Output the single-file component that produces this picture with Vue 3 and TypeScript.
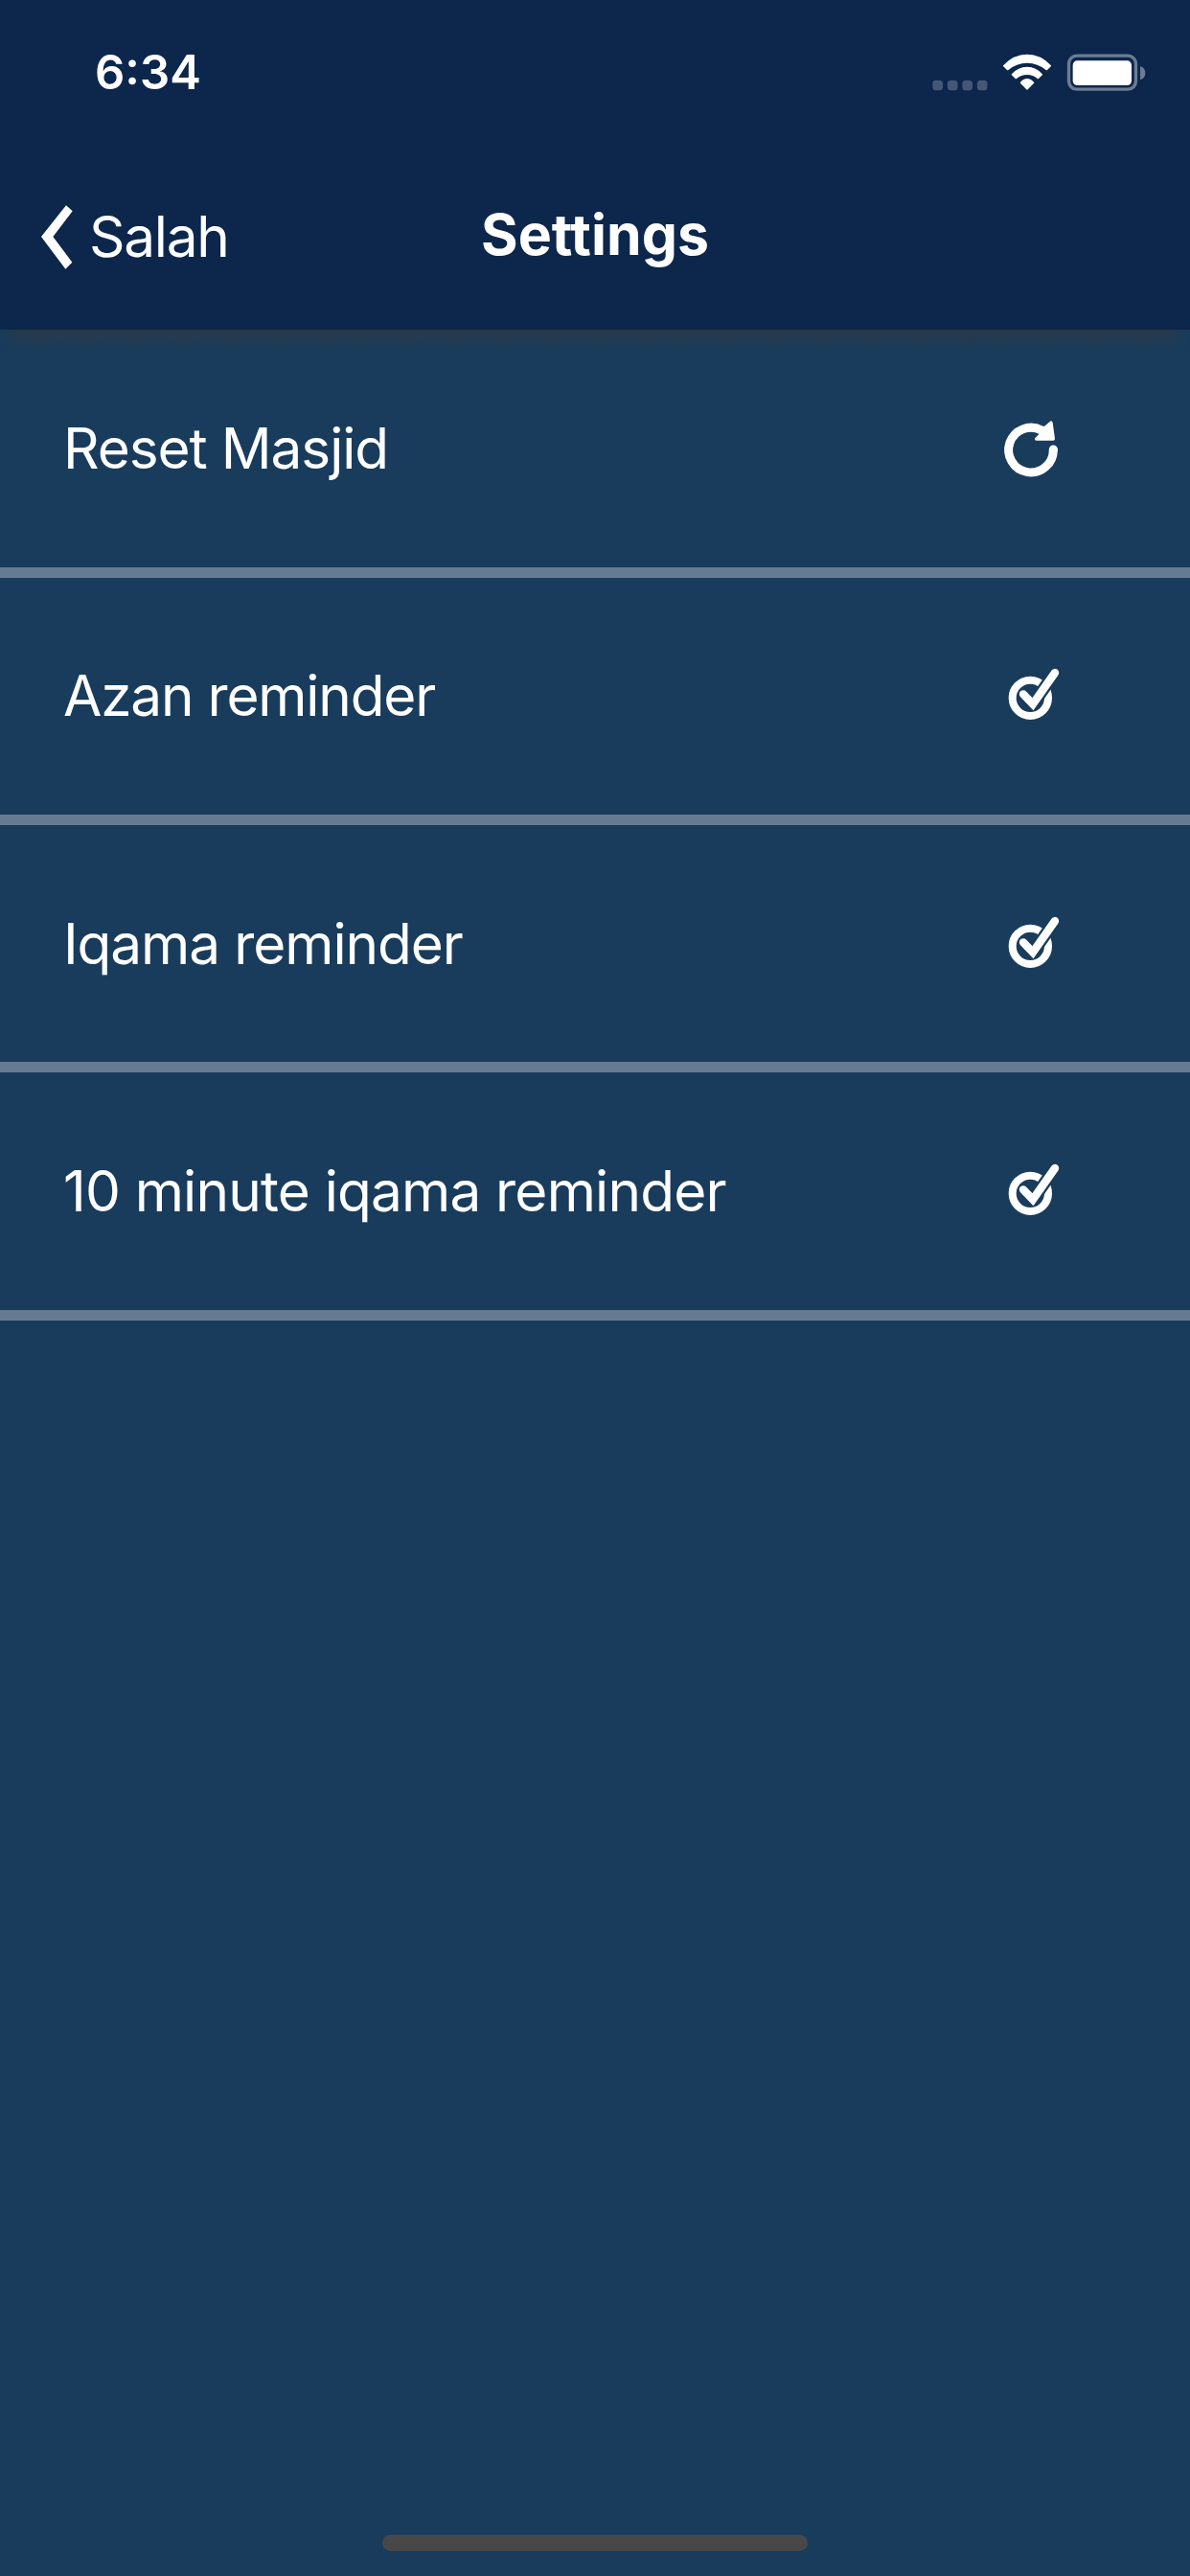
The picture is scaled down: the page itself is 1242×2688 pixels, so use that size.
<script setup lang="ts">
interface SettingRow {
  label: string
  icon: 'reload' | 'check'
  spacing: number
}

const rows: SettingRow[] = [
  { label: 'Reset Masjid', icon: 'reload', spacing: -1.1 },
  { label: 'Azan reminder', icon: 'check', spacing: -1.2 },
  { label: 'Iqama reminder', icon: 'check', spacing: -1.1 },
  { label: '10 minute iqama reminder', icon: 'check', spacing: -0.82 },
]
</script>

<template>
  <div class="screen">
    <header class="header">
      <div class="status">
        <span class="time">6:34</span>
        <svg class="indicators" width="260" height="70" viewBox="0 0 780 210" fill="#fff">
          <g fill="#445776">
            <rect x="70" y="131" width="32" height="32" rx="11" />
            <rect x="116.500" y="131" width="32" height="32" rx="11" />
            <rect x="163" y="131" width="32" height="32" rx="11" />
            <rect x="209.500" y="131" width="32" height="32" rx="11" />
          </g>
          <g stroke="#fff" stroke-width="4" stroke-linejoin="round">
            <path d="M293 86Q324 52 366 52T439 86L427 98Q400 75 366 75T305 98Z" />
            <path d="M319 113Q339 91 366 91T412 113L400 125Q385 112 366 112T331 125Z" />
            <path d="M346 139Q355 128 366 128T386 139L366 159Z" />
          </g>
          <rect x="496.500" y="54.500" width="210" height="105" rx="25" fill="none" stroke="#6d7c94" stroke-width="10" />
          <rect x="509" y="70" width="184" height="77" rx="14" />
          <path d="M720 87Q736 93 736 108.500T720 130Z" fill="#6d7c94" />
        </svg>
      </div>
      <nav class="nav">
        <div class="back">
          <svg width="33" height="67" viewBox="0 0 99 201" fill="#fff">
            <path d="M78 1L98 19L37 99L97 179L76 200L0 99Z" />
          </svg>
          <span class="back-label">Salah</span>
        </div>
        <h1 class="title">Settings</h1>
      </nav>
    </header>
    <main class="list">
      <div v-for="row in rows" :key="row.label" class="row">
        <span class="label" :style="{ letterSpacing: row.spacing + 'px' }">{{ row.label }}</span>
        <svg v-if="row.icon === 'reload'" class="icon" width="90" height="90" viewBox="0 0 270 270">
          <path d="M208 149A70 70 0 1 1 171 87" fill="none" stroke="#fff" stroke-width="27" stroke-linecap="round" />
          <path d="M208 149V147" stroke="#fff" stroke-width="27" stroke-linecap="round" />
          <path d="M155 114L180 90L164 78L181 80L201 63L208 114Z" fill="#fff" stroke="#fff" stroke-width="10" stroke-linejoin="round" />
        </svg>
        <svg v-else class="icon check" width="90" height="90" viewBox="0 0 270 270" fill="none">
          <circle cx="136" cy="145" r="56" stroke="#fff" stroke-width="24" />
          <path d="M144 164L213 66" stroke="#193c5c" stroke-width="39" />
          <path d="M114 133L144 164L213 66" stroke="#fff" stroke-width="25" stroke-linecap="round" />
        </svg>
      </div>
    </main>
    <div class="home"></div>
  </div>
</template>

<style>
body {
  margin: 0;
  background: #193c5c;
}
</style>

<style scoped>
.screen {
  display: flex;
  flex-direction: column;
  width: 1242px;
  height: 2688px;
  overflow: hidden;
  background: #193c5c;
  color: #fff;
  font-family: Inter, "Liberation Sans", sans-serif;
}
.header {
  position: relative;
  flex: none;
  height: 344px;
  background: #0d264b;
}
.header::after {
  content: '';
  position: absolute;
  top: 344px;
  left: 0;
  right: 0;
  height: 22px;
  background: linear-gradient(rgba(48, 57, 66, .75), rgba(48, 57, 66, .35) 45%, rgba(48, 57, 66, 0));
  mask-image: linear-gradient(90deg, transparent, #000 22px, #000 1220px, transparent);
}
.status {
  display: flex;
  justify-content: space-between;
  box-sizing: border-box;
  height: 146px;
  padding: 40px 32px 0 99px;
}
.time {
  height: 72px;
  line-height: 72px;
  font-size: 49px;
  font-weight: 600;
}
.nav {
  display: grid;
  grid-template-columns: 1fr auto 1fr;
  align-items: center;
  height: 198px;
  padding: 0 43px;
}
.back {
  display: flex;
  align-items: center;
  gap: 17px;
}
.back svg {
  margin-top: 4px;
}
.back-label {
  margin-top: 3px;
  font-size: 58.5px;
  line-height: 72px;
  letter-spacing: -1.3px;
}
.title {
  margin: 0;
  font-size: 59px;
  line-height: 72px;
  font-weight: 700;
}
.list {
  flex: 1;
  padding-top: .5px;
}
.row {
  display: flex;
  align-items: center;
  justify-content: space-between;
  height: 247.3px;
  padding: 0 122px 0 66px;
  border-bottom: 11px solid #667b91;
}
.label {
  font-size: 58.5px;
  line-height: 72px;
  white-space: nowrap;
}
.icon {
  flex: none;
  margin-top: -6px;
}
.icon.check {
  margin-top: -2px;
}
.home {
  flex: none;
  width: 444px;
  height: 17px;
  margin: 0 auto 26px;
  border-radius: 9px;
  background: #484848;
}
</style>
